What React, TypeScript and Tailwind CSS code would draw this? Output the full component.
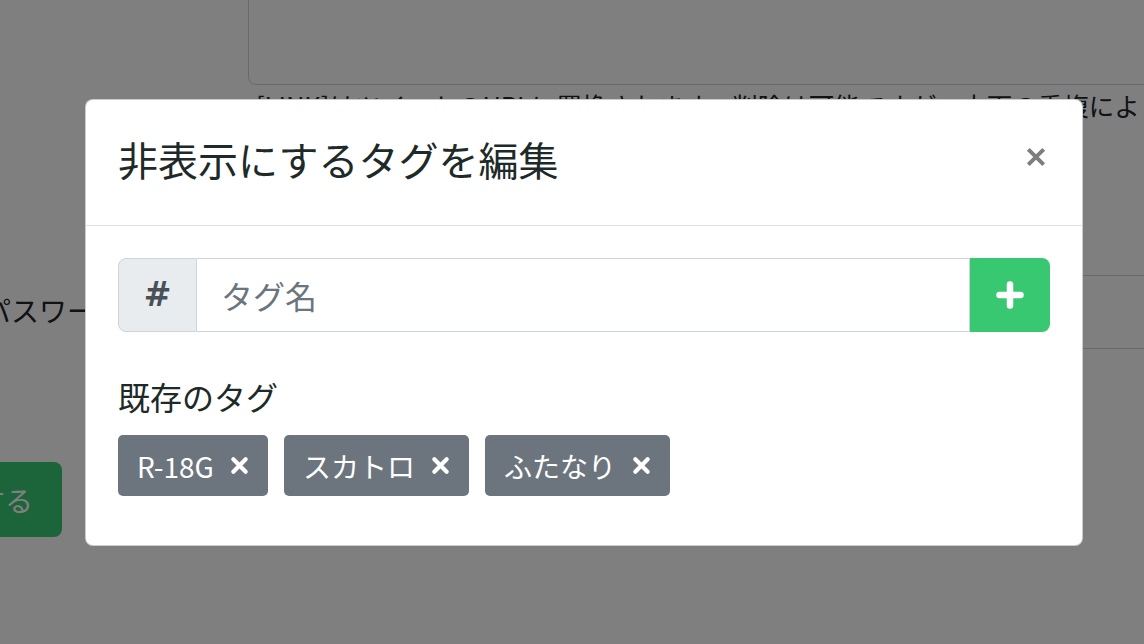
import React from "react";

const font = { fontFamily: '"Noto Sans CJK JP", "Noto Sans", sans-serif' };

function Tag({ label }: { label: string }) {
  return (
    <div className="flex items-center h-[61px] px-[19px] gap-[16px] rounded-[5px] bg-[#6c757d] text-white text-[28px] leading-[40px]">
      <span>{label}</span>
      <svg width="19" height="19" viewBox="0 0 20 20" fill="none">
        <path d="M3.5 3.5 L16.5 16.5 M16.5 3.5 L3.5 16.5" stroke="#fff" strokeWidth="4.4" strokeLinecap="round" />
      </svg>
    </div>
  );
}

export default function App() {
  return (
    <div className="relative w-[1144px] h-[644px] overflow-hidden bg-white text-[#212529]" style={font}>
      {/* background page */}
      <div className="flex flex-col">
        <div className="ml-[248px] mt-[-40px] h-[125px] w-[1000px] shrink-0 border border-[#ced4da] rounded-[8px]" />
        <div className="ml-[256px] mt-[2px] h-[36px] text-[25.5px] leading-[36px] whitespace-nowrap">
          [LINK]はツイートのURLに置換されます。削除は可能ですが、文面の重複により
        </div>
        <div className="mt-[152px] flex items-center h-[74px]">
          <div className="w-[248px] shrink-0 text-[28px] -ml-[17px] pr-[17px] whitespace-nowrap mb-[4px]">パスワード</div>
          <div className="h-[74px] w-[1000px] shrink-0 border border-[#ced4da] rounded-[8px]" />
        </div>
        <div className="mt-[113px] -ml-[60px] w-[122px] h-[75px] rounded-[8px] bg-[#38c872] text-white text-[28px] whitespace-nowrap flex items-center justify-end pr-[29px]">
          保存する
        </div>
      </div>

      {/* backdrop + modal */}
      <div className="absolute inset-0 bg-black/50 pl-[85px] pt-[99px]">
        <div className="w-[998px] bg-white border border-black/20 rounded-[8px]">
          <div className="h-[126px] flex items-center justify-between pl-[32px] pr-[35px] border-b border-[#dee2e6]">
            <h5 className="text-[40px] leading-[56px] text-[#1d2a27] mb-[8px]">非表示にするタグを編集</h5>
            <div className="mb-[12px] opacity-50">
              <svg width="22" height="22" viewBox="0 0 20 20" fill="none">
                <path d="M3 3 L17 17 M17 3 L3 17" stroke="#000" strokeWidth="3.6" />
              </svg>
            </div>
          </div>
          <div className="pt-[32px] px-[32px] pb-[49px]">
            <div className="flex h-[74px]">
              <div
                className="w-[79px] flex items-center justify-center bg-[#e9ecef] border border-[#ced4da] rounded-l-[8px] text-[33px] font-bold text-[#495057]"
                style={{ fontFamily: '"DejaVu Sans", sans-serif' }}
              >
                #
              </div>
              <div className="flex-1 flex items-center border-y border-r border-[#ced4da] pl-[24px] text-[32px] text-[#6c757d]">
                タグ名
              </div>
              <div className="w-[80px] flex items-center justify-center bg-[#38c872] rounded-r-[8px]">
                <svg width="28" height="28" viewBox="0 0 28 28" fill="none">
                  <path d="M14 3.5 V24.5 M3.5 14 H24.5" stroke="#fff" strokeWidth="6.5" strokeLinecap="round" />
                </svg>
              </div>
            </div>
            <div className="mt-[43px] h-[42px] text-[32px] leading-[42px] text-[#1d2a27]">既存のタグ</div>
            <div className="mt-[18px] flex gap-[16px]">
              <Tag label="R-18G" />
              <Tag label="スカトロ" />
              <Tag label="ふたなり" />
            </div>
          </div>
        </div>
      </div>
    </div>
  );
}
